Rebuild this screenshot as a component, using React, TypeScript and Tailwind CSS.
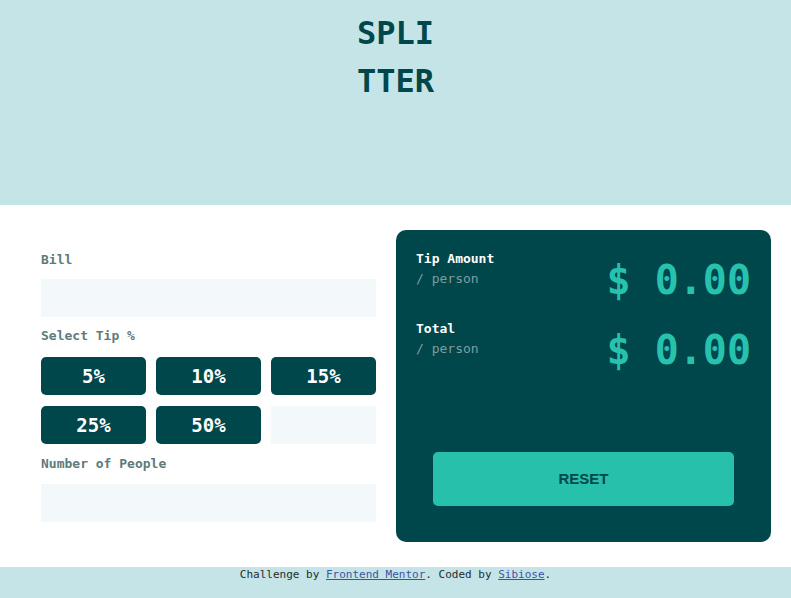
const mono = { fontFamily: '"DejaVu Sans Mono", "Liberation Mono", monospace' };

const tips = ["5%", "10%", "15%", "25%", "50%"];

const ResultRow = ({ label }: { label: string }) => (
  <div className="flex items-start justify-between">
    <div className="pt-[19px]">
      <p className="text-[13px] leading-5 font-bold text-white">{label}</p>
      <p className="text-[13px] leading-5 text-[#7f9d9f]">/ person</p>
    </div>
    <p className="text-[40px] leading-[48px] font-bold text-[#26c2ae] pt-[26px]">
      $ 0.00
    </p>
  </div>
);

const App = () => {
  return (
    <div className="min-h-screen bg-[#c5e4e7]" style={mono}>
      <header className="h-[205px] pt-[9px] flex justify-center">
        <h1 className="w-[80px] text-center break-all text-[32px] leading-[48px] font-bold text-[#00474b]">
          SPLITTER
        </h1>
      </header>

      <main className="bg-white px-5 py-[25px] flex">
        <div className="w-[376px] pl-[21px] pr-5 pt-5 flex flex-col">
          <label className="text-[13px] leading-5 font-bold text-[#5e7a7d]">Bill</label>
          <input className="mt-[9px] h-[38px] w-full bg-[#f3f9fa] outline-none" />

          <label className="mt-[9px] text-[13px] leading-5 font-bold text-[#5e7a7d]">
            Select Tip %
          </label>
          <div className="mt-[11px] grid grid-cols-3 gap-x-[10px] gap-y-[11px]">
            {tips.map((t) => (
              <button
                key={t}
                className="h-[38px] rounded-[5px] bg-[#00474b] text-white text-[19px] font-bold"
              >
                {t}
              </button>
            ))}
            <input className="h-[38px] w-full bg-[#f3f9fa] outline-none" />
          </div>

          <label className="mt-[10px] text-[13px] leading-5 font-bold text-[#5e7a7d]">
            Number of People
          </label>
          <input className="mt-[10px] h-[38px] w-full bg-[#f3f9fa] outline-none" />
        </div>

        <div className="flex-1 h-[312px] rounded-[10px] bg-[#00474b] px-5 flex flex-col">
          <ResultRow label="Tip Amount" />
          <div className="-mt-[4px]">
            <ResultRow label="Total" />
          </div>
          <button
            className="mt-auto mb-[36px] mx-[17px] h-[54px] rounded-[5px] bg-[#26c0ab] text-[#00474b] text-[15px] font-bold"
            style={{ fontFamily: '"Liberation Sans", Arial, sans-serif' }}
          >
            RESET
          </button>
        </div>
      </main>

      <footer className="text-center text-[11px] leading-4 text-[#1f2d2e]">
        Challenge by{" "}
        <a href="#" className="underline text-[#3e52a3]">
          Frontend Mentor
        </a>
        . Coded by{" "}
        <a href="#" className="underline text-[#3e52a3]">
          Sibiose
        </a>
        .
      </footer>
    </div>
  );
};

export default App;
